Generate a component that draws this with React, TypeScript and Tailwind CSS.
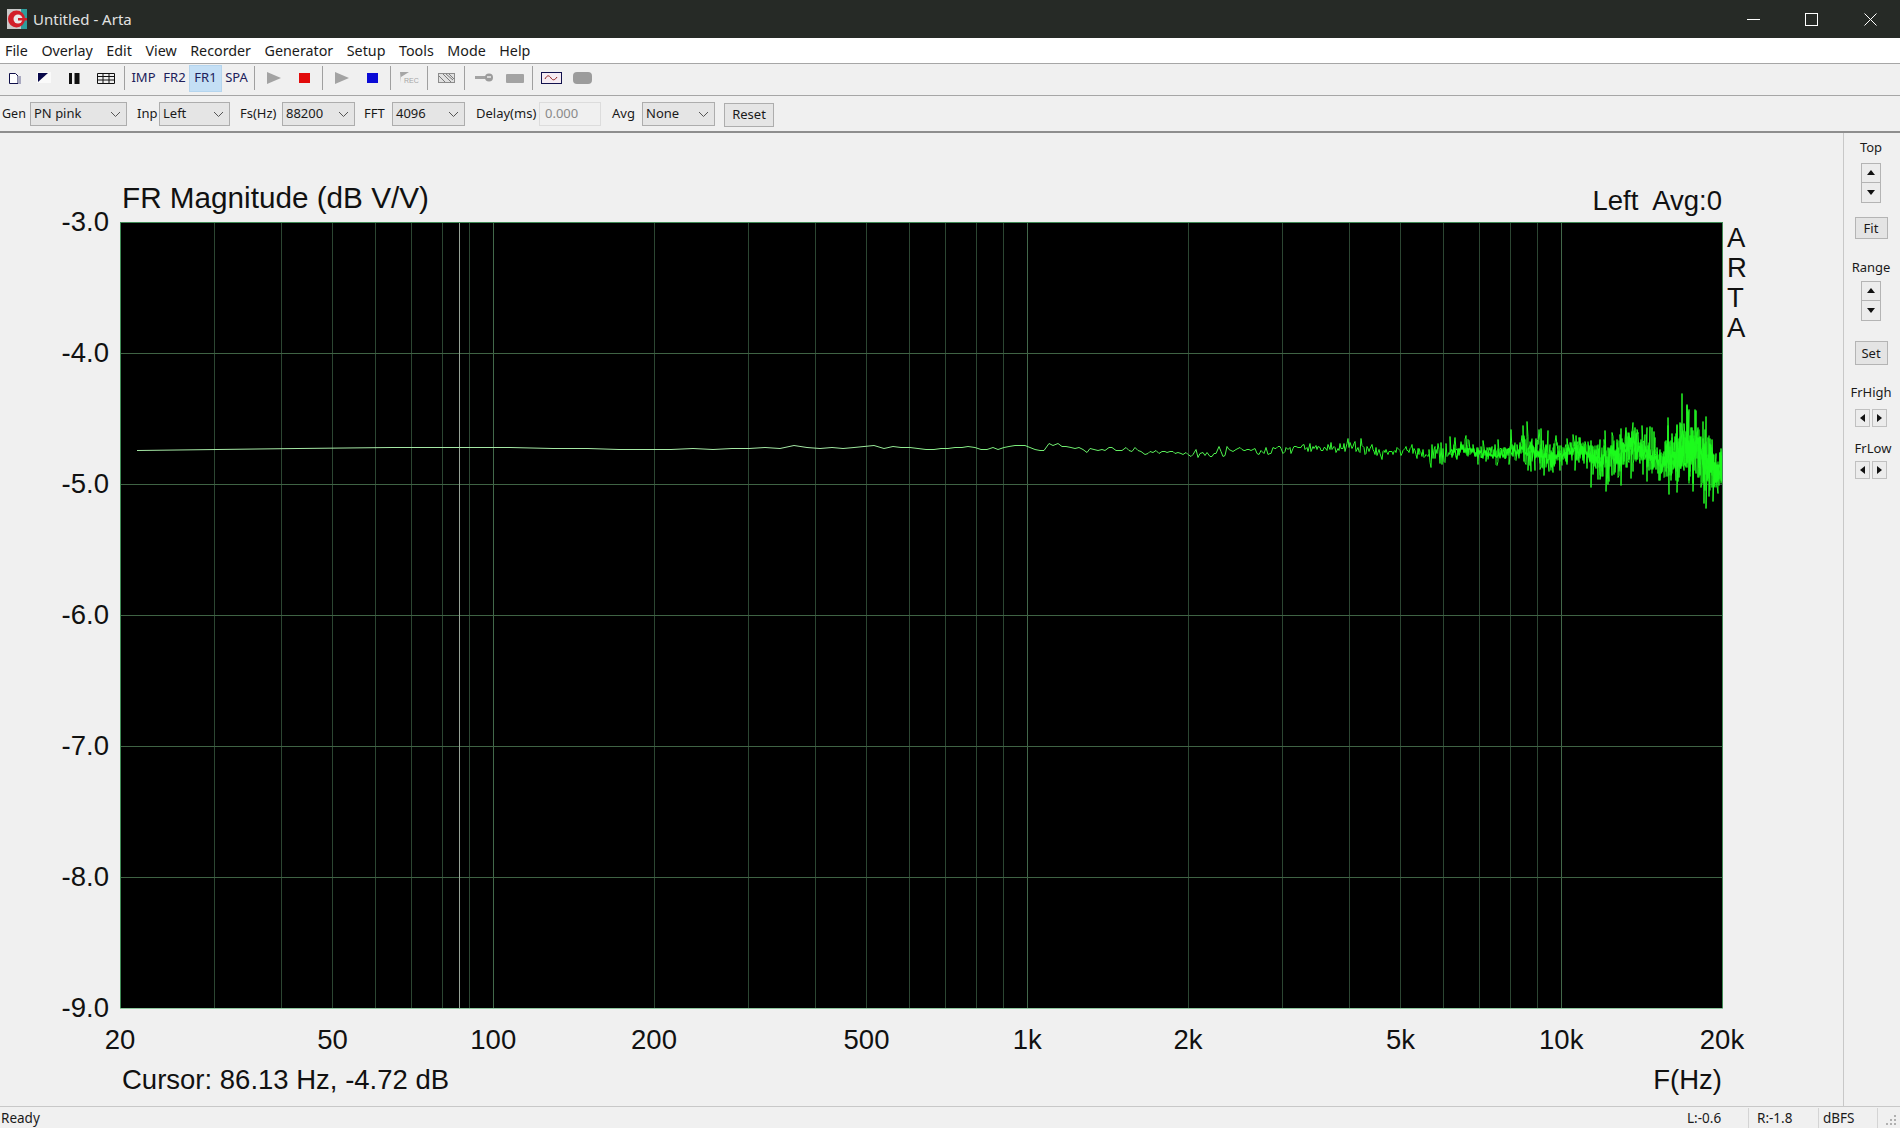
import type { ReactNode } from "react";

const PLOT_W = 1603;
const PLOT_H = 787;
const DECADE = 534;

const fx = (f: number) => DECADE * Math.log10(f / 20);

const GRID_FREQS = [
  30, 40, 50, 60, 70, 80, 90, 100, 200, 300, 400, 500, 600, 700, 800, 900, 1000, 2000, 3000, 4000,
  5000, 6000, 7000, 8000, 9000, 10000,
];
const X_LABELS: [number, string][] = [
  [20, "20"],
  [50, "50"],
  [100, "100"],
  [200, "200"],
  [500, "500"],
  [1000, "1k"],
  [2000, "2k"],
  [5000, "5k"],
  [10000, "10k"],
  [20000, "20k"],
];
const Y_LABELS = ["-3.0", "-4.0", "-5.0", "-6.0", "-7.0", "-8.0", "-9.0"];

// [x, y] in plot pixels, linear in between
const CENTER: [number, number][] = [
  [17, 228],
  [98, 227.5],
  [225, 225.5],
  [400, 225.5],
  [534, 227.5],
  [620, 225.5],
  [746, 225],
  [820, 226.5],
  [908, 224],
  [1068, 231],
  [1235, 224.5],
  [1280, 230],
  [1330, 229],
  [1440, 231],
  [1550, 231],
  [1602, 240],
];
const SIGMA: [number, number][] = [
  [17, 0],
  [560, 0.1],
  [700, 0.9],
  [820, 1.3],
  [908, 2],
  [1068, 1.9],
  [1180, 2.8],
  [1280, 3.8],
  [1380, 7.5],
  [1440, 10.5],
  [1500, 14],
  [1560, 18],
  [1602, 19],
];

function lerp(table: [number, number][], x: number) {
  for (let i = 1; i < table.length; i++) {
    if (x <= table[i][0]) {
      const [x0, y0] = table[i - 1];
      const [x1, y1] = table[i];
      return y0 + ((y1 - y0) * (x - x0)) / (x1 - x0);
    }
  }
  return table[table.length - 1][1];
}

function buildTrace(spread: number, seedStart: number, from = 0) {
  let seed = seedStart;
  const rnd = () => {
    seed = (seed + 0x6d2b79f5) | 0;
    let t = Math.imul(seed ^ (seed >>> 15), 1 | seed);
    t = (t + Math.imul(t ^ (t >>> 7), 61 | t)) ^ t;
    return ((t ^ (t >>> 14)) >>> 0) / 4294967296;
  };
  const pts: string[] = [];
  // FFT 4096 at 88200 Hz: one point per bin
  for (let k = 1; k <= 929; k++) {
    const x = fx(k * 21.533);
    const raw = Math.sqrt(-2 * Math.log(rnd() + 1e-6)) * Math.cos(2 * Math.PI * rnd());
    const gauss = Math.max(-2.6, Math.min(2.6, raw));
    if (x < from) continue;
    const lobe = 1 + 0.3 * Math.sin(x / 13);
    const sigma = lerp(SIGMA, x);
    const wobble = Math.sin(x / 9) * sigma * 0.4;
    const y = lerp(CENTER, x) + wobble + gauss * sigma * lobe * spread;
    pts.push(`${Math.round(x)},${Math.round(y) + 0.5}`);
  }
  return pts.join(" ");
}

const TRACE = buildTrace(1, 20417);
const TRACE_CORE = buildTrace(0.55, 7731, 1330);

function Chevron() {
  return (
    <svg width="11" height="7" viewBox="0 0 11 7" className="shrink-0">
      <path d="M1 1l4.5 4.5L10 1" fill="none" stroke="#555" strokeWidth="1" />
    </svg>
  );
}

function Select({ value, className }: { value: string; className: string }) {
  return (
    <div
      className={`flex h-[24px] items-center justify-between border border-[#adadad] bg-[#e5e5e5] pl-[3px] pr-[5px] text-[#1a1a1a] ${className}`}
    >
      <span>{value}</span>
      <Chevron />
    </div>
  );
}

function Sep() {
  return <div className="mx-[2px] mr-[3px] h-[24px] w-px self-center bg-[#a0a0a0]" />;
}

function ToolBtn({ children, active, w = "w-[31px]" }: { children: ReactNode; active?: boolean; w?: string }) {
  return (
    <div
      className={`flex h-[25px] items-center justify-center text-[13px] text-[#20205a] ${w} ${
        active ? "bg-[#c4dff5] outline outline-1 outline-[#b5d5ee]" : ""
      }`}
    >
      {children}
    </div>
  );
}

function SpinBtn({ dir }: { dir: "up" | "down" | "left" | "right" }) {
  const tri = {
    up: "M4 1l4 5H0z",
    down: "M0 1h8L4 6z",
    left: "M6 0v8L1 4z",
    right: "M1 0v8l5-4z",
  }[dir];
  return (
    <svg width="8" height="8" viewBox="0 0 8 8">
      <path d={tri} fill="#111" />
    </svg>
  );
}

function Spinner() {
  return (
    <div className="flex w-[20px] flex-col">
      <div className="flex h-[20px] items-center justify-center border border-[#b4b4b4] bg-[#ececec]">
        <SpinBtn dir="up" />
      </div>
      <div className="flex h-[20px] items-center justify-center border border-t-0 border-[#b4b4b4] bg-[#ececec]">
        <SpinBtn dir="down" />
      </div>
    </div>
  );
}

function ArrowPair() {
  return (
    <div className="flex gap-[2px]">
      <div className="flex h-[18px] w-[15px] items-center justify-center border border-[#c0c0c0] bg-[#ececec]">
        <SpinBtn dir="left" />
      </div>
      <div className="flex h-[18px] w-[15px] items-center justify-center border border-[#c0c0c0] bg-[#ececec]">
        <SpinBtn dir="right" />
      </div>
    </div>
  );
}

function PanelButton({ label, h }: { label: string; h: string }) {
  return (
    <div className={`flex w-[33px] items-center justify-center border border-[#b4b4b4] bg-[#e4e4e4] text-[13px] ${h}`}>
      {label}
    </div>
  );
}

function Chart() {
  return (
    <svg width={PLOT_W} height={PLOT_H} viewBox={`0 0 ${PLOT_W} ${PLOT_H}`} className="block bg-black">
      <defs>
        <linearGradient id="trace" gradientUnits="userSpaceOnUse" x1="700" y1="0" x2="1300" y2="0">
          <stop offset="0" stopColor="#a5e8a5" />
          <stop offset="1" stopColor="#22f722" />
        </linearGradient>
      </defs>
      {GRID_FREQS.map((f) => (
        <line
          key={f}
          x1={Math.round(fx(f)) + 0.5}
          x2={Math.round(fx(f)) + 0.5}
          y1="0"
          y2={PLOT_H}
          stroke={f === 100 || f === 1000 || f === 10000 ? "#42684a" : "#2c4632"}
          shapeRendering="crispEdges"
        />
      ))}
      {[1, 2, 3, 4, 5].map((i) => (
        <line
          key={i}
          x1="0"
          x2={PLOT_W}
          y1={131 * i + 0.5}
          y2={131 * i + 0.5}
          stroke="#3f6344"
          shapeRendering="crispEdges"
        />
      ))}
      <line x1="339.5" x2="339.5" y1="0" y2={PLOT_H} stroke="#97a397" shapeRendering="crispEdges" />
      <polyline points={TRACE} fill="none" stroke="url(#trace)" strokeWidth="1" strokeLinejoin="bevel" />
      <polyline points={TRACE_CORE} fill="none" stroke="#1cfb1c" strokeWidth="1.2" strokeLinejoin="bevel" />
      <rect x="0.5" y="0.5" width={PLOT_W - 1} height={PLOT_H - 1} fill="none" stroke="#3f8a55" shapeRendering="crispEdges" />
      <line x1="0" x2={PLOT_W} y1={PLOT_H - 0.5} y2={PLOT_H - 0.5} stroke="#8fc79f" shapeRendering="crispEdges" />
    </svg>
  );
}

function Toolbar() {
  return (
    <div className="flex h-[32px] items-center border-b border-[#a6a6a6] pb-[3px]">
      <ToolBtn w="w-[29px]">
        <svg width="14" height="13" viewBox="0 0 14 13">
          <path d="M1.5 1.5h6l2.5 2.5v7.500h-8.500z" fill="#fff" stroke="#10104a" />
          <rect x="10" y="4" width="3" height="8" fill="#a9a9c0" />
        </svg>
      </ToolBtn>
      <ToolBtn w="w-[29px]">
        <svg width="14" height="12" viewBox="0 0 14 12">
          <rect x="0" y="0" width="14" height="11" fill="#fafafa" />
          <path d="M1 1h10L1 10z" fill="#08084a" />
        </svg>
      </ToolBtn>
      <ToolBtn w="w-[32px]">
        <svg width="11" height="11" viewBox="0 0 11 11">
          <rect x="0" y="0" width="3" height="11" fill="#111" />
          <rect x="5.500" y="0" width="5" height="11" fill="#111" />
        </svg>
      </ToolBtn>
      <ToolBtn>
        <svg width="18" height="11" viewBox="0 0 18 11">
          <path d="M.5.500h17v10H.5zM.5 3.500h17M.5 7h17M6 .500v10M12 .500v10" fill="none" stroke="#111" />
        </svg>
      </ToolBtn>
      <div className="ml-[3px] mr-[3px] h-[24px] w-px bg-[#a0a0a0]" />
      <ToolBtn>IMP</ToolBtn>
      <ToolBtn>FR2</ToolBtn>
      <ToolBtn active>FR1</ToolBtn>
      <ToolBtn>SPA</ToolBtn>
      <Sep />
      <ToolBtn>
        <svg width="14" height="12" viewBox="0 0 14 12">
          <path d="M0 0l14 6-14 6z" fill="#a3a3a3" />
        </svg>
      </ToolBtn>
      <ToolBtn>
        <div className="h-[10px] w-[11px] bg-[#e20b0b]" />
      </ToolBtn>
      <Sep />
      <ToolBtn>
        <svg width="14" height="12" viewBox="0 0 14 12">
          <path d="M0 0l14 6-14 6z" fill="#a3a3a3" />
        </svg>
      </ToolBtn>
      <ToolBtn>
        <div className="h-[10px] w-[11px] bg-[#0b0bd6]" />
      </ToolBtn>
      <Sep />
      <ToolBtn>
        <svg width="20" height="12" viewBox="0 0 20 12">
          <path d="M0 0h9L1 5v6z" fill="#a6a6a6" />
          <text x="4" y="10.500" fontSize="7" fill="#a6a6a6" fontFamily="Liberation Sans, sans-serif">
            REC
          </text>
        </svg>
      </ToolBtn>
      <Sep />
      <ToolBtn>
        <svg width="18" height="12" viewBox="0 0 18 12">
          <rect x="0.500" y="1.500" width="16" height="9" fill="#e0e0e0" stroke="#8c8c8c" />
          <path d="M1 4l6 6M5 2l8 8M11 2l5 5M8 2l7 6" stroke="#7a7a7a" strokeWidth="1" />
        </svg>
      </ToolBtn>
      <Sep />
      <ToolBtn>
        <svg width="18" height="10" viewBox="0 0 18 10">
          <rect x="0" y="3" width="12" height="3" fill="#a3a3a3" />
          <circle cx="14" cy="4.500" r="4" fill="#9c9c9c" />
          <rect x="12" y="3" width="4" height="2" fill="#d8d8d8" />
        </svg>
      </ToolBtn>
      <ToolBtn>
        <div className="h-[9px] w-[18px] rounded-[1px] bg-[#a3a3a3]" />
      </ToolBtn>
      <Sep />
      <ToolBtn>
        <svg width="21" height="12" viewBox="0 0 21 12">
          <rect x="0.500" y="0.500" width="20" height="11" fill="#f6ecf2" stroke="#12124e" />
          <path d="M4 7c2-4 4-4 6-1s4 2 6-1" fill="none" stroke="#902020" />
        </svg>
      </ToolBtn>
      <ToolBtn>
        <div className="h-[12px] w-[19px] rounded-[4px] bg-[#9c9c9c]" />
      </ToolBtn>
    </div>
  );
}

function ParamBar() {
  return (
    <div className="flex h-[37px] items-center border-b-2 border-[#8e8e8e] pt-[1px] text-[13px] text-[#1a1a1a]">
      <span className="ml-[2px] w-[28px] text-[12.500px]">Gen</span>
      <Select value="PN pink" className="w-[97px]" />
      <span className="ml-[10px] w-[22px]">Inp</span>
      <Select value="Left" className="w-[71px]" />
      <span className="ml-[10px] w-[42px]">Fs(Hz)</span>
      <Select value="88200" className="w-[73px]" />
      <span className="ml-[9px] w-[28px]">FFT</span>
      <Select value="4096" className="w-[73px]" />
      <span className="ml-[11px] w-[63px]">Delay(ms)</span>
      <div className="flex h-[24px] w-[62px] items-center border border-[#dcdcdc] bg-[#f0f0f0] pl-[5px] text-[#8a8a8a]">
        0.000
      </div>
      <span className="ml-[11px] w-[30px]">Avg</span>
      <Select value="None" className="w-[73px]" />
      <div className="ml-[9px] mt-[1px] flex h-[24px] w-[50px] items-center justify-center border border-[#adadad] bg-[#e5e5e5]">
        Reset
      </div>
    </div>
  );
}

function SidePanel() {
  return (
    <aside className="flex w-[57px] shrink-0 flex-col items-center border-l border-[#c8c8c8] pr-[2px] pt-[5px] text-[13px] leading-[18px] text-[#1a1a1a]">
      <span>Top</span>
      <div className="mt-[7px]">
        <Spinner />
      </div>
      <div className="mt-[14px]">
        <PanelButton label="Fit" h="h-[22px]" />
      </div>
      <span className="mt-[19px]">Range</span>
      <div className="mt-[5px]">
        <Spinner />
      </div>
      <div className="mt-[20px]">
        <PanelButton label="Set" h="h-[24px]" />
      </div>
      <span className="mt-[18px]">FrHigh</span>
      <div className="mt-[8px]">
        <ArrowPair />
      </div>
      <span className="ml-[4px] mt-[12px]">FrLow</span>
      <div className="mt-[4px]">
        <ArrowPair />
      </div>
    </aside>
  );
}

export default function App() {
  const menus = ["File", "Overlay", "Edit", "View", "Recorder", "Generator", "Setup", "Tools", "Mode", "Help"];

  return (
    <div className="flex h-[1128px] w-[1900px] flex-col overflow-hidden bg-[#f0f0f0] font-['Noto_Sans',sans-serif]">
      <header className="flex h-[38px] shrink-0 items-center bg-[#262a26] text-[15px] text-[#e2e2e2]">
        <svg width="20" height="20" viewBox="0 0 20 20" className="ml-[7px]">
          <rect width="20" height="20" fill="#c9c9c9" />
          <path d="M14 0h6v20h-6z" fill="#2f9c9c" />
          <circle cx="9.500" cy="10" r="8.500" fill="#d21f2a" />
          <circle cx="11" cy="10" r="4.500" fill="#e9e9e9" />
          <rect x="11" y="9" width="9" height="2.500" fill="#d21f2a" />
        </svg>
        <span className="ml-[6px]">Untitled - Arta</span>
        <div className="ml-auto flex text-white">
          <div className="flex w-[58px] justify-center">
            <svg width="13" height="13" viewBox="0 0 13 13">
              <path d="M0 6.500h13" stroke="#fff" />
            </svg>
          </div>
          <div className="flex w-[59px] justify-center">
            <svg width="13" height="13" viewBox="0 0 13 13">
              <rect x="0.500" y="0.500" width="12" height="12" fill="none" stroke="#fff" />
            </svg>
          </div>
          <div className="flex w-[59px] justify-center">
            <svg width="13" height="13" viewBox="0 0 13 13">
              <path d="M.5.500l12 12M12.500.500l-12 12" stroke="#fff" />
            </svg>
          </div>
        </div>
      </header>

      <nav className="flex h-[26px] shrink-0 items-center gap-[13.500px] border-b border-[#a6a6a6] bg-white pl-[5px] text-[14.300px] text-[#1a1a1a]">
        {menus.map((m) => (
          <span key={m}>{m}</span>
        ))}
      </nav>

      <Toolbar />
      <ParamBar />

      <div className="flex min-h-0 flex-1">
        <main className="flex min-w-0 flex-1 flex-col font-['Liberation_Sans',sans-serif] text-[27.500px] leading-[36px] text-[#111]">
          <div className="flex h-[89px] w-[1722px] justify-between pl-[122px]">
            <span className="mt-[47px] text-[29.700px]">FR Magnitude (dB V/V)</span>
            <span className="mt-[50px] whitespace-pre">Left  Avg:0</span>
          </div>

          <div className="flex">
            <div className="-my-[15px] flex h-[816px] w-[120px] flex-col items-end justify-between pr-[11px] leading-[30px]">
              {Y_LABELS.map((l) => (
                <span key={l}>{l}</span>
              ))}
            </div>
            <Chart />
            <div className="ml-[4px] flex flex-col pt-[1px] leading-[30px]">
              {["A", "R", "T", "A"].map((c, i) => (
                <span key={i}>{c}</span>
              ))}
            </div>
          </div>

          <div className="relative ml-[120px] h-[51px] w-[1602px]">
            {X_LABELS.map(([f, l]) => (
              <span key={l} className="absolute top-[13px] -translate-x-1/2" style={{ left: fx(f) }}>
                {l}
              </span>
            ))}
          </div>

          <div className="flex w-[1722px] justify-between pl-[122px] pt-[2px]">
            <span>Cursor: 86.13 Hz, -4.72 dB</span>
            <span>F(Hz)</span>
          </div>
        </main>
        <SidePanel />
      </div>

      <footer className="flex h-[22px] shrink-0 items-center border-t border-[#c8c8c8] pt-[1px] text-[13.500px] text-[#1a1a1a]">
        <span className="ml-[1px] flex-1">Ready</span>
        <div className="w-[61px]">L:-0.6</div>
        <div className="flex h-full w-[70px] items-center border-l border-[#d4d4d4] pl-[8px]">R:-1.8</div>
        <div className="flex h-full w-[59px] items-center border-l border-[#d4d4d4] pl-[4px]">dBFS</div>
        <div className="flex h-full w-[23px] items-end justify-end border-l border-[#d4d4d4] pb-[2px] pr-[2px]">
          <svg width="12" height="12" viewBox="0 0 12 12">
            <path d="M8 1h2v2H8zM4 5h2v2H4zM8 5h2v2H8zM0 9h2v2H0zM4 9h2v2H4zM8 9h2v2H8z" fill="#b0b0b0" />
          </svg>
        </div>
      </footer>
    </div>
  );
}
